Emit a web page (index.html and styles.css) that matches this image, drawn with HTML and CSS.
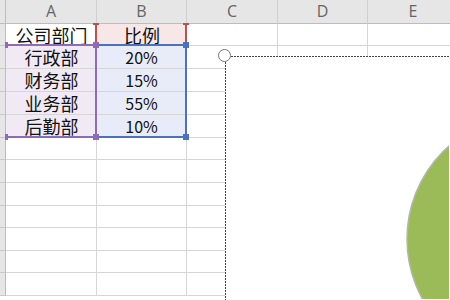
FILE: index.html
```html
<!DOCTYPE html>
<html lang="zh">
<head>
<meta charset="utf-8">
<title>Sheet</title>
<link rel="stylesheet" href="styles.css">
</head>
<body>
<div class="sheet">
  <div class="grid">
    <div class="hd corner"></div><div class="hd">A</div><div class="hd">B</div><div class="hd">C</div><div class="hd">D</div><div class="hd">E</div>

    <div class="rh"></div><div class="c txt">公司部门</div><div class="c txt name">比例</div><div class="c"></div><div class="c"></div><div class="c"></div>
    <div class="rh"></div><div class="c txt cat">行政部</div><div class="c num val">20%</div><div class="c"></div><div class="c"></div><div class="c"></div>
    <div class="rh"></div><div class="c txt cat">财务部</div><div class="c num val">15%</div><div class="c"></div><div class="c"></div><div class="c"></div>
    <div class="rh"></div><div class="c txt cat">业务部</div><div class="c num val">55%</div><div class="c"></div><div class="c"></div><div class="c"></div>
    <div class="rh"></div><div class="c txt cat">后勤部</div><div class="c num val">10%</div><div class="c"></div><div class="c"></div><div class="c"></div>
    <div class="rh"></div><div class="c"></div><div class="c"></div><div class="c"></div><div class="c"></div><div class="c"></div>
    <div class="rh"></div><div class="c"></div><div class="c"></div><div class="c"></div><div class="c"></div><div class="c"></div>
    <div class="rh"></div><div class="c"></div><div class="c"></div><div class="c"></div><div class="c"></div><div class="c"></div>
    <div class="rh"></div><div class="c"></div><div class="c"></div><div class="c"></div><div class="c"></div><div class="c"></div>
    <div class="rh"></div><div class="c"></div><div class="c"></div><div class="c"></div><div class="c"></div><div class="c"></div>
    <div class="rh"></div><div class="c"></div><div class="c"></div><div class="c"></div><div class="c"></div><div class="c"></div>
    <div class="rh"></div><div class="c"></div><div class="c"></div><div class="c"></div><div class="c"></div><div class="c"></div>
  </div>

  <div class="rng rng-cat"></div>
  <div class="rng rng-val"></div>
  <div class="nm nm-l"></div>
  <div class="nm nm-r"></div>
  <div class="hdl p h1"></div>
  <div class="hdl p h2"></div>
  <div class="hdl pl h3"></div>
  <div class="hdl pl h4"></div>
  <div class="hdl b h5"></div>
  <div class="hdl b h6"></div>

  <div class="chart">
    <svg class="pie" width="224" height="243" viewBox="0 0 224 243">
      <circle cx="306" cy="183" r="124" fill="#9bbb59" stroke="#b5b5ae" stroke-width="1.5"/>
    </svg>
  </div>
  <div class="knob"></div>
</div>
</body>
</html>
```

FILE: styles.css
```css
* { box-sizing: border-box; }
html, body { margin: 0; padding: 0; background: #fff; }
body { width: 450px; height: 300px; overflow: hidden; }

.sheet { position: relative; width: 450px; height: 300px; overflow: hidden; }

.grid {
  display: grid;
  grid-template-columns: 6px 91px 90px 91px 90px 91px;
  grid-template-rows: 24px 22px 23px 23px 23px 23px 22px 23px 23px 22px 23px 22px 23px;
}

.hd {
  background: #e6e6e6;
  border-right: 1px solid #cfcfcf;
  border-bottom: 1px solid #bdbdbd;
  display: flex; align-items: center; justify-content: center;
  font-family: "Open Sans", "Noto Sans", sans-serif;
  font-size: 16px;
  color: #656565;
  padding-bottom: 1px;
}
.hd.corner { border-right: 1px solid #bdbdbd; }

.rh {
  background: #e6e6e6;
  border-right: 1px solid #bdbdbd;
  border-bottom: 1px solid #c9c9c9;
}

.c {
  border-right: 1px solid #d6d6d6;
  border-bottom: 1px solid #d6d6d6;
  display: flex; align-items: center; justify-content: center;
  font-family: "Noto Sans CJK SC", "Noto Sans", sans-serif;
  color: #111;
}
.txt { font-size: 18px; line-height: 18px; padding-left: 1px; }
.num { font-size: 16px; line-height: 16px; }
.name { background: #f7e7e7; }
.cat { background: #f1eaf5; }
.val { background: #e8ecf8; }

.rng { position: absolute; }
.rng-cat {
  left: 5px; top: 44px; width: 92px; height: 94px;
  border-top: 2px solid #8e6cb5;
  border-bottom: 2px solid #8e6cb5;
  border-right: 2px solid #8e6cb5;
}
.rng-val {
  left: 97px; top: 44px; width: 90px; height: 94px;
  border-top: 2px solid #4a72bf;
  border-bottom: 2px solid #4a72bf;
  border-right: 2px solid #4a72bf;
}
.nm {
  position: absolute; top: 23px; width: 6px; height: 20px;
  border-top: 2px solid #c0504d;
}
.nm::after {
  content: ""; position: absolute; left: 2px; top: 0; width: 2px; height: 18px;
  background: #c0504d;
}
.nm-l { left: 93px; }
.nm-r { left: 183px; }

.hdl { position: absolute; width: 6px; height: 6px; }
.p { background: #8e6cb5; }
.pl { background: #8e6cb5; width: 3px; }
.b { background: #4a72bf; }
.h1 { left: 93px; top: 42px; }
.h2 { left: 93px; top: 134px; }
.h3 { left: 5px; top: 42px; }
.h4 { left: 5px; top: 134px; }
.h5 { left: 183px; top: 42px; }
.h6 { left: 183px; top: 134px; }

.chart {
  position: absolute; left: 225px; top: 56px; width: 230px; height: 250px;
  background: #fff;
  overflow: hidden;
}
.chart::before {
  content: ""; position: absolute; left: 0; top: 0; right: 0; height: 1px;
  background: repeating-linear-gradient(90deg, #444 0 2px, transparent 2px 3px);
}
.chart::after {
  content: ""; position: absolute; left: 0; top: 0; bottom: 0; width: 1px;
  background: repeating-linear-gradient(180deg, #444 0 2px, transparent 2px 3px);
}
.pie { display: block; }

.knob {
  position: absolute; left: 218px; top: 49px; width: 13px; height: 13px;
  border-radius: 50%;
  background: #fff;
  border: 1.5px solid #777;
}
```
